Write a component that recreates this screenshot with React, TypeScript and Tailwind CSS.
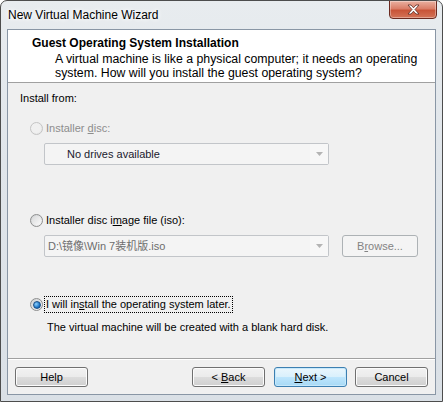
import React from 'react';

const font = "font-['Segoe_UI','Liberation_Sans',Arial,sans-serif]";

function Radio({ checked = false, disabled = false }: { checked?: boolean; disabled?: boolean }) {
  return (
    <span
      className={
        'relative flex h-[13px] w-[13px] shrink-0 items-center justify-center rounded-full border ' +
        (disabled
          ? 'border-[#c4c4c4] bg-gradient-to-br from-[#f4f4f4] to-[#e6e6e6]'
          : 'border-[#8e8f8f] bg-gradient-to-br from-[#cfd1d3] to-[#f6f6f6]')
      }
    >
      {checked ? (
        <span className="h-[8px] w-[8px] rounded-full border border-[#1b4f86] bg-[radial-gradient(circle_at_35%_35%,#8fd2ff,#1e77c8_60%,#104a8a)]" />
      ) : (
        <span
          className={
            'h-[9px] w-[9px] rounded-full ' +
            (disabled ? 'bg-[#f0f0f0]' : 'bg-gradient-to-br from-[#d9dadb] to-[#fafafa]')
          }
        />
      )}
    </span>
  );
}

function Combo({ text }: { text: React.ReactNode }) {
  return (
    <div className="flex h-[22px] w-[285px] items-center rounded-[2px] border border-[#c2c5c9] bg-[#f4f4f4]">
      <div className="flex-1 truncate text-[#6d6d6d]">{text}</div>
      <div className="flex h-full w-[18px] items-center justify-center bg-[#f7f7f7]">
        <svg width="7" height="4" viewBox="0 0 7 4">
          <path d="M0 0h7L3.5 4z" fill="#b4b4b4" />
        </svg>
      </div>
    </div>
  );
}

function Button({
  children,
  primary = false,
  disabled = false,
  className = '',
}: {
  children: React.ReactNode;
  primary?: boolean;
  disabled?: boolean;
  className?: string;
}) {
  const look = disabled
    ? 'border-[#adb2b5] bg-[#f4f4f4] text-[#838383]'
    : primary
      ? 'border-[#3c7fb1] bg-[linear-gradient(#eaf6fd_0%,#d9f0fc_50%,#bee6fd_50%,#a7d9f5_100%)] text-black shadow-[inset_0_0_0_1px_#c6e8fb]'
      : 'border-[#707070] bg-[linear-gradient(#f2f2f2_0%,#ebebeb_50%,#dddddd_50%,#cfcfcf_100%)] text-black shadow-[inset_0_0_0_1px_#fcfcfc]';
  return (
    <div
      className={
        'flex items-center justify-center rounded-[3px] border text-[11px] leading-none ' + look + ' ' + className
      }
    >
      <span className="whitespace-pre">{children}</span>
    </div>
  );
}

export default function App() {
  return (
    <div
      className={
        'relative flex h-[402px] w-[443px] flex-col overflow-hidden rounded-t-[7px] border border-[#4d4d4d] bg-[linear-gradient(180deg,#e8ecef,#e0e5ea_40%,#dae0e6)] text-[12px] text-black ' +
        font
      }
    >
      {/* title bar */}
      <div className="flex h-[28px] shrink-0 items-start justify-between">
        <div className="pl-[7px] pt-[7px] text-[12px] leading-[15px] text-black [text-shadow:0_0_6px_#fff,0_0_4px_#fff]">
          New Virtual Machine Wizard
        </div>
        <div className="mr-[5px] mt-[-1px] flex h-[19px] w-[48px] items-center justify-center rounded-b-[4px] border border-[#6b2a20] bg-[linear-gradient(#eab0a0_0%,#da7e68_45%,#c85438_55%,#d47458_100%)] shadow-[inset_0_0_0_1px_rgba(255,255,255,0.35)]">
          <svg width="13" height="11" viewBox="0 0 13 11">
            <path
              d="M1 1h3l2.5 2.8L9 1h3L8 5.5 12 10H9L6.5 7.2 4 10H1l4-4.5z"
              fill="#fff"
              stroke="#5a2a22"
              strokeWidth="0.8"
              strokeLinejoin="round"
            />
          </svg>
        </div>
      </div>

      {/* client area */}
      <div className="mx-[6px] mb-[6px] flex flex-1 flex-col border border-[#8996a5] bg-[#f0f0f0]">
        {/* header */}
        <div className="h-[53px] shrink-0 border-b border-[#a0a0a0] bg-white pl-[24px] pt-[6px] leading-[15px]">
          <div className="font-bold">Guest Operating System Installation</div>
          <div className="pl-[23px] pt-[1px] text-[12.3px] leading-[14px]">
            A virtual machine is like a physical computer; it needs an operating
            <br />
            system. How will you install the guest operating system?
          </div>
        </div>

        {/* body */}
        <div className="flex flex-1 flex-col pl-[12px] pt-[8px] text-[11px] leading-[15px]">
          <div>Install from:</div>

          <div className="mt-[15px] flex h-[15px] items-center gap-[1px] pl-[10px] text-[#8d8d8d]">
            <Radio disabled />
            <span className="pl-[2px]">
              Installer <span className="underline">d</span>isc:
            </span>
          </div>
          <div className="mt-[7px] pl-[24px]">
            <Combo text={<span className="pl-[22px] text-[#1a1a2e]">No drives available</span>} />
          </div>

          <div className="mt-[48px] flex h-[15px] items-center gap-[1px] pl-[10px]">
            <Radio />
            <span className="pl-[2px]">
              Installer disc i<span className="underline">m</span>age file (iso):
            </span>
          </div>
          <div className="mt-[7px] flex items-center gap-[13px] pl-[24px]">
            <Combo
              text={
                <span className="pl-[3px] font-['Segoe_UI','Liberation_Sans','Noto_Sans_CJK_SC',sans-serif]">
                  D:\镜像\Win 7装机版.iso
                </span>
              }
            />
            <Button disabled className="h-[22px] w-[76px]">
              B<span className="underline">r</span>owse...
            </Button>
          </div>

          <div className="mt-[39px] flex h-[17px] items-center pl-[10px]">
            <Radio checked />
            <span className="ml-[1px] border border-dotted border-black px-[1px] leading-[15px]">
              I will in<span className="underline">s</span>tall the operating system later.
            </span>
          </div>
          <div className="mt-[7px] pl-[27px]">The virtual machine will be created with a blank hard disk.</div>
        </div>

        {/* buttons */}
        <div className="flex h-[36px] shrink-0 items-start border-t border-[#a0a0a0] px-[7px] pt-[8px] shadow-[inset_0_1px_0_#fff]">
          <Button className="h-[20px] w-[73px]">Help</Button>
          <div className="flex-1" />
          <Button className="h-[20px] w-[73px]">
            &lt; <span className="underline">B</span>ack
          </Button>
          <Button primary className="ml-[9px] h-[20px] w-[73px]">
            <span className="underline">N</span>ext &gt;
          </Button>
          <Button className="ml-[8px] h-[20px] w-[73px]">Cancel</Button>
        </div>
      </div>
    </div>
  );
}
